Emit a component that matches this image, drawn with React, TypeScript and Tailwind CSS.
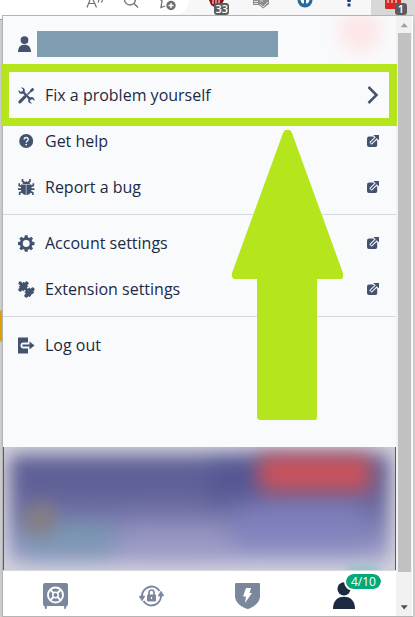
import type { ReactNode } from 'react';

interface MenuEntry {
  label: string;
  icon: ReactNode;
  external?: boolean;
}

/** 17px menu icon */
function Glyph({ children }: { children: ReactNode }) {
  return (
    <svg viewBox="0 0 17 17" className="size-[17px] shrink-0" fill="currentColor" aria-hidden="true">
      {children}
    </svg>
  );
}

const ToolsIcon = (
  <Glyph>
    <path d="M9.500 7.500 13.500 3.500" fill="none" stroke="currentColor" strokeWidth="1.600" />
    <path d="M11.800 3.200 14.600 .7 16.300 2.400 13.800 5.200Z" />
    <path d="M6.800 9.900 1.900 14.900" fill="none" stroke="currentColor" strokeWidth="3" strokeLinecap="round" />
    <path d="M4.500 4.500 12.500 12.500" fill="none" stroke="currentColor" strokeWidth="2.400" />
    <path d="M3 .6C5.500 0 7.400 2 6.800 4.400L4.400 6.800C2 7.400 0 5.500 .6 3L2.500 4.800 4.800 4.300 5 2.400Z" />
    <path d="M14 16.400C11.500 17 9.600 15 10.200 12.600L12.600 10.200C15 9.600 17 11.500 16.400 14L14.500 12.200 12.300 12.700 12.100 14.600Z" />
  </Glyph>
);

const HelpIcon = (
  <Glyph>
    <circle cx="8.200" cy="8" r="7" />
    <path d="M6.200 6.600C6.200 3.900 10.200 3.900 10.200 6.500 10.200 8 8.200 7.900 8.200 9.600" fill="none" stroke="#f9fafc" strokeWidth="1.400" />
    <circle cx="8.200" cy="11.600" r=".9" fill="#f9fafc" />
  </Glyph>
);

const BugIcon = (
  <Glyph>
    <path d="M4.500 5C4.800 1.600 11.700 1.600 12 5Z" />
    <path d="M3 5.600H7.700V16C4.800 15.700 3 13.500 3 10.500ZM13.500 5.600H8.800V16C11.700 15.700 13.500 13.500 13.500 10.500Z" />
    <path d="M7 5.600H9.500V16H7Z" opacity=".5" />
    <path
      d="M6.300 3.500 4.500 2.300V0M10.200 3.500 12 2.300V0M4 7.500 1.200 6.600V4.300M12.500 7.500 15.300 6.600V4.300M3.800 10.200H0M12.700 10.200H16.500M4.300 12.700 1.700 13.700V16M12.200 12.700 14.800 13.700V16"
      fill="none"
      stroke="currentColor"
      strokeWidth="1.700"
    />
  </Glyph>
);

const GearIcon = (
  <Glyph>
    <circle cx="8.200" cy="8.500" r="4.900" fill="none" stroke="currentColor" strokeWidth="2.900" />
    {[0, 45, 90, 135, 180, 225, 270, 315].map(angle => (
      <path key={angle} d="M6.300 3.200 6.800 .2H9.600L10.100 3.200Z" transform={`rotate(${angle} 8.200 8.500)`} />
    ))}
  </Glyph>
);

const PuzzleIcon = (
  <Glyph>
    <g transform="rotate(45 8.500 8.500)">
      <rect x="1" y="5" width="6.500" height="7" />
      <rect x="9" y="5" width="7" height="7" />
      <rect x="6" y="7" width="5" height="3" />
      <circle cx="-.3" cy="8.500" r="1.800" />
      <circle cx="4.200" cy="4" r="1.900" />
      <circle cx="4.200" cy="13" r="1.900" />
      <circle cx="12.700" cy="4" r="1.900" />
      <circle cx="12.700" cy="13" r="1.900" />
      <circle cx="16.800" cy="8.500" r="1.300" fill="#f9fafc" />
    </g>
  </Glyph>
);

const LogoutIcon = (
  <Glyph>
    <path d="M0 .5H10V5.500H5.500A3 3 0 0 0 5.500 11.500H10V16.500H0Z" />
    <path d="M4.500 7.600H11.500V4.500L16.500 8.500 11.500 12.500V9.400H4.500Z" />
  </Glyph>
);

const groups: MenuEntry[][] = [
  [
    { label: 'Fix a problem yourself', icon: ToolsIcon },
    { label: 'Get help', icon: HelpIcon, external: true },
    { label: 'Report a bug', icon: BugIcon, external: true },
  ],
  [
    { label: 'Account settings', icon: GearIcon, external: true },
    { label: 'Extension settings', icon: PuzzleIcon, external: true },
  ],
  [{ label: 'Log out', icon: LogoutIcon }],
];

function PersonIcon({ className }: { className: string }) {
  return (
    <svg viewBox="0 0 22 27" className={className} fill="currentColor" aria-hidden="true">
      <circle cx="11" cy="6.800" r="6.600" />
      <path d="M0 27C0 19 4 14.700 11 14.700S22 19 22 27Z" />
    </svg>
  );
}

function ExternalIcon() {
  return (
    <svg viewBox="0 0 12 12" className="size-3" aria-hidden="true">
      <path d="M2 1.500H6L8 3 10.200 6V10.200Q10.200 12 8.500 12H2Q0 12 0 10V3.500Q0 1.500 2 1.500Z" fill="currentColor" />
      <path d="M3.500 8.500 8.800 3.200" stroke="#f9fafc" strokeWidth="3.400" />
      <path d="M6.300 0H12V5.500Z" fill="currentColor" />
      <path d="M4 8 9.500 2.500" stroke="currentColor" strokeWidth="1.400" />
    </svg>
  );
}

function MenuRow({ entry }: { entry: MenuEntry }) {
  const rowClass = 'flex h-[46px] w-full items-center gap-2.5 pr-[17px] pl-[15px] text-left';
  const body = (
    <>
      <span className="text-[#43536f]">{entry.icon}</span>
      <span className="flex-1">{entry.label}</span>
    </>
  );

  if (entry.external) {
    return (
      <a href="#" className={rowClass}>
        {body}
        <span className="text-[#43536f]">
          <ExternalIcon />
        </span>
      </a>
    );
  }
  return (
    <button type="button" className={rowClass}>
      {body}
      {entry.label !== 'Log out' && (
        <svg viewBox="0 0 12 18" className="h-[18px] w-3 text-[#43536f]" aria-hidden="true">
          <path d="M1.500 1 9.500 9 1.500 17" fill="none" stroke="currentColor" strokeWidth="2.500" />
        </svg>
      )}
    </button>
  );
}

function Toolbar() {
  const slot = 'flex w-11 shrink-0 justify-center';
  const count = 'absolute bottom-0 rounded-[3px] bg-[#5c5c5c] text-[11px] leading-3 font-semibold text-white';
  return (
    <header className="flex h-[15px] bg-[#f7f7f7]">
      <div className="mr-1.5 flex flex-1 justify-end rounded-br-2xl bg-white pr-1 text-[#707070]">
        <button type="button" aria-label="Read aloud" className="flex w-9 justify-center">
          <svg viewBox="0 0 18 15" className="h-[15px] w-[18px]" fill="none" stroke="currentColor" strokeWidth="1.200">
            <path d="M1 7.500 5.500-4 10.500 7.500M3 3.500H9M12-1Q13.500 0 12 2.500M15-3Q17.500-1 15.500 2.500" />
          </svg>
        </button>
        <button type="button" aria-label="Zoom" className="flex w-9 justify-center">
          <svg viewBox="0 0 16 15" className="h-[15px] w-4" fill="none" stroke="currentColor" strokeWidth="1.300">
            <circle cx="7" cy="-.5" r="5.500" />
            <path d="M11 3.500 15 7.500" />
          </svg>
        </button>
        <button type="button" aria-label="Add favourite" className="flex w-9 justify-center">
          <svg viewBox="0 0 18 15" className="h-[15px] w-[18px]" fill="none" stroke="currentColor">
            <path d="M1-2 4 1 3 7.500 7 6M11-3 13-1H17" strokeWidth="1.300" />
            <circle cx="13" cy="5.500" r="4.700" fill="currentColor" stroke="none" />
            <path d="M13 3V8M10.500 5.500H15.500" stroke="#fff" strokeWidth="1.400" />
          </svg>
        </button>
      </div>
      <button type="button" className={`${slot} relative`} aria-label="Blocker">
        <svg viewBox="0 0 16 15" className="h-[15px] w-4">
          <path d="M0 0H15L13 4 7 8 2 5Z" fill="#8f1218" />
          <path d="M4 0V4M7 0V6M10 0V5" stroke="#fff" />
        </svg>
        <span className={`${count} right-2.5 px-px`}>33</span>
      </button>
      <button type="button" className={slot} aria-label="Tag checker">
        <svg viewBox="0 0 16 15" className="h-[15px] w-4">
          <path d="M0 0H16V4L10 8.500 6 5H0Z" fill="#8d8d8d" />
          <path d="M1 1.500H5M1 3.500H5M7 1H10M7 4 10 7 15 2" fill="none" stroke="#ddd" />
        </svg>
      </button>
      <button type="button" className={slot} aria-label="Privacy">
        <svg viewBox="0 0 16 15" className="h-[15px] w-4">
          <circle cx="8" cy="0" r="7.500" fill="#276b9b" />
          <path d="M3.500 0H7V3.500Q4.500 4 3.500 0ZM9 0H12.500Q11.500 4 9 3.500Z" fill="#fff" />
        </svg>
      </button>
      <button type="button" className={slot} aria-label="Alerts">
        <svg viewBox="0 0 8 15" className="h-[15px] w-2" fill="#203f80">
          <path d="M2 0H6L5.500 2H2.500ZM2.500 3.500H5.500V6.500H2.500Z" />
        </svg>
      </button>
      <button type="button" className={`${slot} relative bg-[#d8d8d8]`} aria-label="Passwords">
        <svg viewBox="0 0 16 15" className="h-[15px] w-4">
          <path d="M0 0H16V9H1Q0 9 0 8Z" fill="#d42a27" />
          <path d="M3 0V3M7 0V3M11 0V3" stroke="#fff" />
        </svg>
        <span className={`${count} right-2 px-[3px]`}>1</span>
      </button>
    </header>
  );
}

/** Out of focus promo card */
function PromoCard() {
  return (
    <div className="relative h-[123px] overflow-hidden border-x border-[#55558c] bg-[#d3d3dd]">
      <div className="absolute inset-x-1.5 top-2 bottom-2 bg-linear-to-b from-[#5f6096] from-30% via-[#7374a8] via-60% to-[#a8a8d0] blur-[9px]" />
      <div className="absolute top-4 left-52 h-10 w-14 bg-[#4c5092] opacity-60 blur-[12px]" />
      <div className="absolute top-14 right-8 h-10 w-32 bg-[#8184c3] opacity-80 blur-[14px]" />
      <div className="absolute top-[76px] left-28 h-8 w-28 bg-[#a5a1ca] opacity-60 blur-[14px]" />
      <div className="absolute top-[76px] left-5 h-8 w-22 bg-[#759cb1] opacity-80 blur-[12px]" />
      <div className="absolute top-14 left-5 size-8 rounded-full bg-[#8b7d79] opacity-90 blur-[9px]" />
      <div className="absolute top-2 right-6 h-9 w-28 bg-[#cb525a] blur-[10px]" />
      <div className="absolute right-4 -bottom-3 h-4 w-8 bg-[#7fbfc0] opacity-70 blur-[4px]" />
    </div>
  );
}

function BottomNav() {
  const tab = 'flex flex-1 items-center justify-center';
  return (
    <nav className="flex h-[46px] border-t border-[#d5d8de] bg-white px-1 pt-1 text-[#7a879c]">
      <button type="button" className={tab} aria-label="Vault">
        <svg viewBox="0 0 25 26" className="h-[26px] w-[25px]">
          <path d="M2 0H23Q25 0 25 2V21Q25 23 23.500 23L22.800 26H21.500L21 23H4L3.500 26H2.200L1.500 23Q0 23 0 21V2Q0 0 2 0Z" fill="currentColor" />
          <circle cx="12.500" cy="12" r="7.500" fill="none" stroke="#fff" strokeWidth="1.900" />
          <circle cx="12.500" cy="12" r="2.700" fill="none" stroke="#fff" strokeWidth="1.500" />
          <path d="M7.500 7 10.500 10M17.500 7 14.500 10M7.500 17 10.500 14M17.500 17 14.500 14" stroke="#fff" strokeWidth="1.900" />
        </svg>
      </button>
      <button type="button" className={tab} aria-label="Generator">
        <svg viewBox="0 0 25 24" className="h-6 w-[25px]">
          <path d="M3 12A9.500 9.500 0 0 1 20.500 7M22 12A9.500 9.500 0 0 1 4.500 17" fill="none" stroke="currentColor" strokeWidth="2" />
          <path d="M0 12H6L3 17ZM19 12H25L22 7Z" fill="currentColor" stroke="currentColor" strokeWidth=".5" />
          <rect x="8" y="10.500" width="9" height="7" rx="1" fill="currentColor" />
          <path d="M10 11V8.500A2.500 2.500 0 0 1 15 8.500V11" fill="none" stroke="currentColor" strokeWidth="1.700" />
          <path d="M12.500 13V15" stroke="#fff" strokeWidth="1.200" />
        </svg>
      </button>
      <button type="button" className={tab} aria-label="Autofill">
        <svg viewBox="0 0 25 26" className="h-[26px] w-[25px]">
          <path d="M1 0H24Q25 0 25 1V13C25 20 18 24.500 12.500 26 7 24.500 0 20 0 13V1Q0 0 1 0Z" fill="currentColor" />
          <path d="M11 5H16L14.500 10H17L10 20 11 13.500H8Z" fill="#fff" />
        </svg>
      </button>
      <button type="button" className={`${tab} relative text-[#1b2a40]`} aria-label="Account">
        <PersonIcon className="h-[27px] w-[22px]" />
        <span className="absolute -top-[3px] left-1/2 rounded-full border-2 border-white bg-[#05a877] bg-clip-padding px-[5px] text-[12px] leading-[15px] text-white">
          4/10
        </span>
      </button>
    </nav>
  );
}

function Scrollbar() {
  return (
    <div className="flex w-[17px] shrink-0 flex-col border-r border-white bg-[#f1f1f1]" aria-hidden="true">
      <svg viewBox="0 0 17 17" className="h-[17px] w-4" fill="#a0a0a0">
        <path d="M5 11.500 8.700 7 12.500 11.500Z" />
      </svg>
      <div className="mr-px ml-0.5 flex-1 bg-[#c1c1c1]" />
      <div className="h-[27px]" />
      <svg viewBox="0 0 17 17" className="h-[17px] w-4" fill="#505050">
        <path d="M5 6 8.700 10.500 12.500 6Z" />
      </svg>
    </div>
  );
}

export default function App() {
  return (
    <div className="flex min-h-screen flex-col bg-[#d2d2d2] font-['Open_Sans','Noto_Sans',sans-serif] text-[16px] leading-6 text-[#1b2b45]">
      <Toolbar />
      <div className="relative flex flex-1 pr-0.5 pl-0.5">
        {/* page behind the popup */}
        <div className="absolute top-0 left-0 h-[5px] w-0.5 border-b border-[#999999] bg-white" />
        <div className="absolute top-[295px] left-0 h-8 w-0.5 rounded-l-full bg-[#dda000]" />

        <div className="flex flex-1 border border-r-0 border-[#b4b4b4] shadow-md">
          <main className="relative flex min-w-0 flex-1 flex-col bg-[#f9fafc]">
            <div className="relative flex h-14 items-center gap-1.5 pr-[118px] pl-[15px]">
              <div className="absolute top-0 right-0 h-14 w-20 overflow-hidden">
                <div className="ml-6 h-9 w-10 rounded-b-full bg-[#ffdfdf] opacity-80 blur-[9px]" />
              </div>
              <PersonIcon className="h-4 w-[13px] text-[#43536f]" />
              <div className="h-[26px] flex-1 bg-[#7f9db1]" />
            </div>

            {groups.map((group, g) => (
              <div key={g} className={g === 0 ? 'pb-1' : 'border-t border-[#d5d8de] pt-[5px] pb-1'}>
                {group.map((entry, i) => (
                  <div key={entry.label} className="relative">
                    <MenuRow entry={entry} />
                    {g === 0 && i === 0 && (
                      <div className="pointer-events-none absolute -inset-y-2 -right-px -left-0.5 border-8 border-[#b5e61d]" />
                    )}
                  </div>
                ))}
              </div>
            ))}

            <svg
              viewBox="0 0 112 290"
              className="pointer-events-none absolute top-[114px] right-[52px] h-[290px] w-28"
              fill="#b5e61d"
              aria-hidden="true"
            >
              <path d="M53 0H58L60 3 111 143V147L110 149H85V288L84 290H27L25 288V149H2L0 147V143L51 3Z" />
            </svg>

            <div className="mt-auto">
              <PromoCard />
              <BottomNav />
            </div>
          </main>
          <Scrollbar />
        </div>
      </div>
    </div>
  );
}
